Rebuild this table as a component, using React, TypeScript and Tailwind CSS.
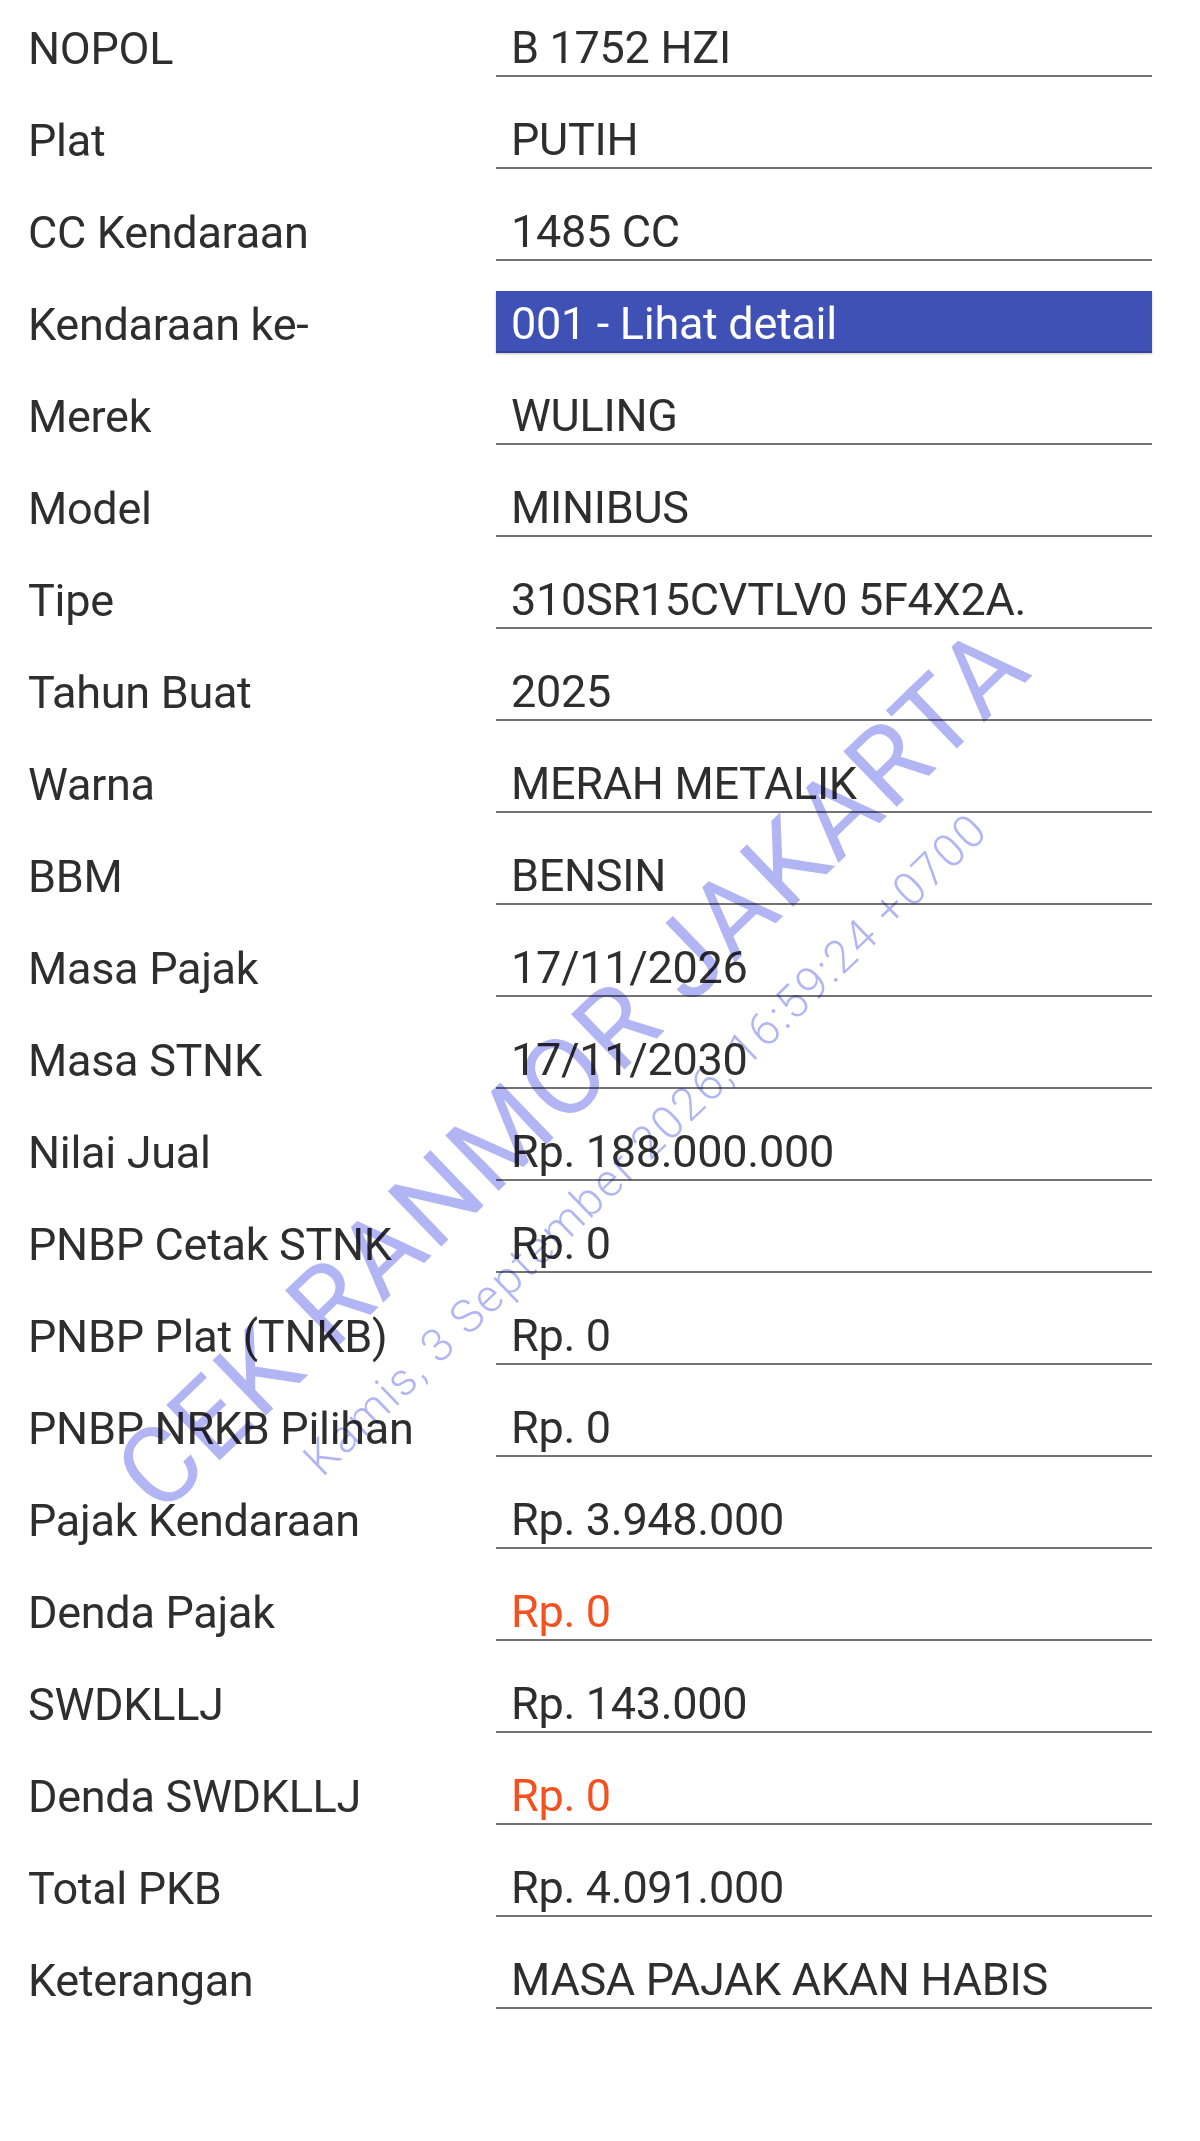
import React from 'react';

type Row = { label: string; value: string; tone?: 'link' | 'red' };

const rows: Row[] = [
  { label: 'NOPOL', value: 'B 1752 HZI' },
  { label: 'Plat', value: 'PUTIH' },
  { label: 'CC Kendaraan', value: '1485 CC' },
  { label: 'Kendaraan ke-', value: '001 - Lihat detail', tone: 'link' },
  { label: 'Merek', value: 'WULING' },
  { label: 'Model', value: 'MINIBUS' },
  { label: 'Tipe', value: '310SR15CVTLV0 5F4X2A.' },
  { label: 'Tahun Buat', value: '2025' },
  { label: 'Warna', value: 'MERAH METALIK' },
  { label: 'BBM', value: 'BENSIN' },
  { label: 'Masa Pajak', value: '17/11/2026' },
  { label: 'Masa STNK', value: '17/11/2030' },
  { label: 'Nilai Jual', value: 'Rp. 188.000.000' },
  { label: 'PNBP Cetak STNK', value: 'Rp. 0' },
  { label: 'PNBP Plat (TNKB)', value: 'Rp. 0' },
  { label: 'PNBP NRKB Pilihan', value: 'Rp. 0' },
  { label: 'Pajak Kendaraan', value: 'Rp. 3.948.000' },
  { label: 'Denda Pajak', value: 'Rp. 0', tone: 'red' },
  { label: 'SWDKLLJ', value: 'Rp. 143.000' },
  { label: 'Denda SWDKLLJ', value: 'Rp. 0', tone: 'red' },
  { label: 'Total PKB', value: 'Rp. 4.091.000' },
  { label: 'Keterangan', value: 'MASA PAJAK AKAN HABIS' },
];

const App: React.FC = () => {
  return (
    <div
      className="relative w-[1200px] min-h-[2141px] bg-white overflow-hidden text-[#2e2e2e]"
      style={{ fontFamily: 'Roboto, "Noto Sans", sans-serif' }}
    >
      <div className="flex flex-col gap-[30px] pt-[15px] pl-[28px] pr-[48px]">
        {rows.map((row) => (
          <div key={row.label} className="flex items-center h-[62px]">
            <div className="w-[468px] shrink-0 text-[45px] leading-none pt-[4px] tracking-[-0.3px]">
              {row.label}
            </div>
            {row.tone === 'link' ? (
              <div className="flex-1 h-full flex items-center pl-[15px] pt-[4px] bg-[#3f51b5] text-white text-[45px] leading-none tracking-[-0.3px] border-b-2 border-[#34449c] shadow-[0_1px_2px_rgba(0,0,0,0.25)]">
                {row.value}
              </div>
            ) : (
              <div
                className={
                  row.tone === 'red'
                    ? 'flex-1 h-full flex items-center pl-[15px] pt-[4px] text-[45px] leading-none tracking-[-0.3px] border-b-2 border-[#737373] text-[#f4511e]'
                    : 'flex-1 h-full flex items-center pl-[15px] pt-[4px] text-[45px] leading-none tracking-[-0.3px] border-b-2 border-[#737373]'
                }
              >
                {row.value}
              </div>
            )}
          </div>
        ))}
      </div>

      {/* watermark */}
      <div className="pointer-events-none absolute left-[598px] top-[1095px] -translate-x-1/2 -translate-y-1/2 -rotate-[44deg] flex flex-col items-center mix-blend-multiply text-[#b2b5f3] whitespace-nowrap">
        <div className="text-[108px] leading-none tracking-[3px]">CEK RANMOR JAKARTA</div>
        <div className="text-[46px] font-light leading-none mt-[28px] tracking-[2px]">
          Kamis, 3 September 2026, 16:59:24 +0700
        </div>
      </div>
    </div>
  );
};

export default App;
